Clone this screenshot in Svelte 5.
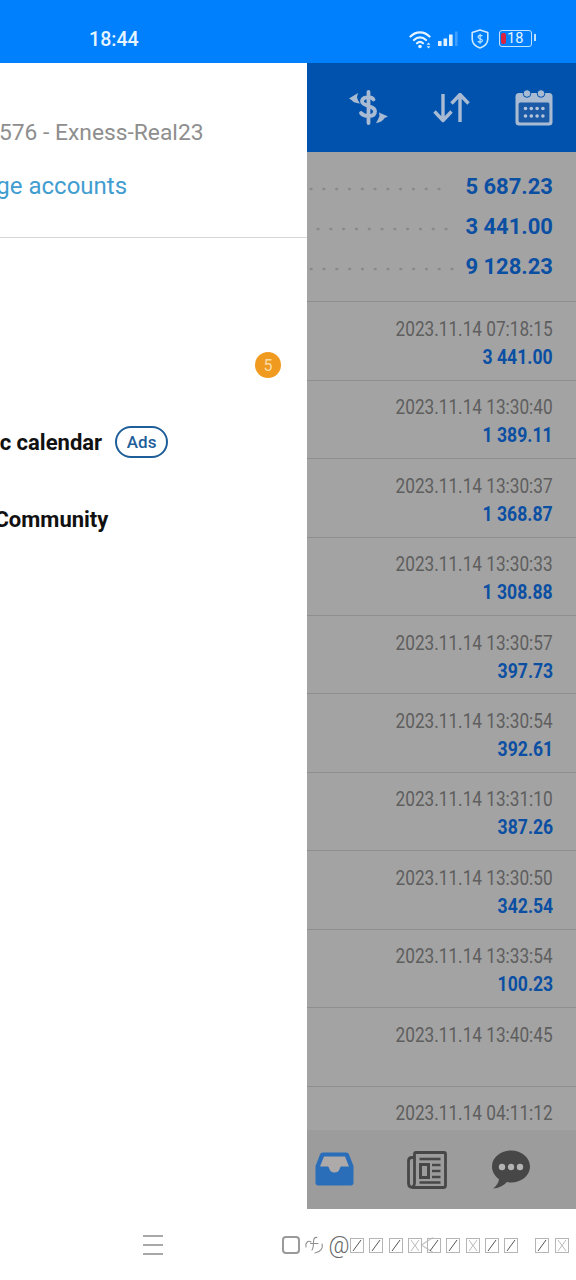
<script>
  const totals = [
    { value: '5 687.23', shift: 'a' },
    { value: '3 441.00', shift: 'b' },
    { value: '9 128.23', shift: 'c' }
  ];
  const rows = [
    ['2023.11.14 07:18:15', '3 441.00'],
    ['2023.11.14 13:30:40', '1 389.11'],
    ['2023.11.14 13:30:37', '1 368.87'],
    ['2023.11.14 13:30:33', '1 308.88'],
    ['2023.11.14 13:30:57', '397.73'],
    ['2023.11.14 13:30:54', '392.61'],
    ['2023.11.14 13:31:10', '387.26'],
    ['2023.11.14 13:30:50', '342.54'],
    ['2023.11.14 13:33:54', '100.23'],
    ['2023.11.14 13:40:45', ''],
    ['2023.11.14 04:11:12', '']
  ];
  const tofuA = ['s', 's', 's', 'x', 's', 's', 'x', 's', 's'];
  const tofuB = ['s', 'x'];
  const dots = [0, 1, 2, 3];
</script>

{#snippet tofu(kind)}
  <svg class="tofu" viewBox="0 0 14 15" width="14" height="15" aria-hidden="true">
    <rect x="0.5" y="0.5" width="13" height="14" fill="none" stroke="#b5b5b5" />
    <path d="M3 13L11 2" stroke={kind === 's' ? '#555' : '#bbb'} stroke-width="1" />
    {#if kind === 'x'}<path d="M3 2L11 13" stroke="#bbb" stroke-width="1" />{/if}
  </svg>
{/snippet}

<div class="page">
  <header class="status">
    <span class="time">18:44</span>
    <div class="status-icons">
      <svg class="wifi" viewBox="0 0 24 20" width="24" height="20" aria-hidden="true">
        <path d="M1.5 7.5C7 2 15 2 20.5 7.5M5 11C8.5 7.6 13.5 7.6 17 11M8 14.2C9.8 12.6 12.2 12.6 14 14.2" fill="none" stroke="#e4f3ff" stroke-width="2.2" stroke-linecap="round" />
        <circle cx="11" cy="17.5" r="1.8" fill="#e4f3ff" />
        <path d="M19.5 13.5l2 2.2h-4zM19.5 19.5l2-2.2h-4z" fill="#cfe8ff" />
      </svg>
      <svg class="signal" viewBox="0 0 20 16" width="20" height="16" aria-hidden="true">
        <rect x="0" y="10" width="3.6" height="5" fill="#dff1ff" />
        <rect x="5.5" y="7.5" width="3.6" height="7.5" fill="#dff1ff" />
        <rect x="11" y="3.5" width="3.6" height="11.5" fill="#dff1ff" />
        <rect x="17" y="0.5" width="2.6" height="14.5" fill="#3f9eff" />
      </svg>
      <svg class="shield" viewBox="0 0 18 20" width="18" height="20" aria-hidden="true">
        <path d="M9 1L16.8 3.6V10C16.8 14.4 13.4 17.4 9 19C4.6 17.4 1.2 14.4 1.2 10V3.6Z" fill="none" stroke="#cfeaff" stroke-width="1.6" stroke-linejoin="round" />
        <path d="M11.4 7.2C10.6 6 7 6 7 8C7 10.2 11.4 9.4 11.4 11.6C11.4 13.6 7.6 13.4 6.8 12.2M9.1 4.8V14.8" fill="none" stroke="#bfe6ff" stroke-width="1.2" />
      </svg>
      <div class="battery">
        <span class="level"></span>
        <span class="pct">18</span>
      </div>
    </div>
  </header>

  <div class="body">
    <aside class="drawer">
      <div class="drawer-inner">
        <div class="account">
          <p class="acct">576 - Exness-Real23</p>
          <p class="manage">Manage accounts</p>
        </div>
        <ul class="items">
          <li></li>
          <li><span class="badge">5</span></li>
          <li><span class="label">Economic calendar</span><span class="ads">Ads</span></li>
          <li><span class="label">Traders Community</span></li>
        </ul>
      </div>
    </aside>

    <main class="main">
      <div class="toolbar">
        <svg class="tool money" viewBox="0 0 40 36" width="40" height="36" aria-hidden="true">
          <path d="M25.5 9.5C23.5 6.5 14 6 14 11.5C14 16.5 27 15 27 21.5C27 27.5 16 27 13 23M20.5 2V33" fill="none" stroke="#a9bbd3" stroke-width="3.8" stroke-linecap="round" />
          <path d="M1 8.5L10 3L9 7C9.5 9.5 10.5 11.5 12 13.5C7 13 4.5 11.5 3.5 10Z" fill="#a9bbd3" />
          <path d="M40 26.5L31 22.5L31.5 26C30.5 28.5 29.5 30.5 28 33C33 32.5 35.5 30 36.5 28Z" fill="#a9bbd3" />
        </svg>
        <svg class="tool arrows" viewBox="0 0 38 30" width="38" height="30" aria-hidden="true">
          <path d="M10 1V27M1.5 18.5L10 27.5L18.5 18.5M27 29V2M18.5 10.5L27 1.5L35.5 10.5" fill="none" stroke="#a9bbd3" stroke-width="3.4" stroke-linejoin="round" />
        </svg>
        <svg class="tool cal" viewBox="0 0 38 37" width="38" height="37" aria-hidden="true">
          <rect x="0.5" y="4" width="37" height="32.5" rx="3.5" fill="#a9bbd3" />
          <rect x="3.6" y="13.5" width="30.8" height="20" rx="1.5" fill="#1b5aa6" />
          <circle cx="12" cy="4.5" r="3.8" fill="#a9bbd3" stroke="#0052ad" stroke-width="1" />
          <circle cx="26" cy="4.5" r="3.8" fill="#a9bbd3" stroke="#0052ad" stroke-width="1" />
          {#each dots as d}
            <circle cx={10.5 + d * 5.8} cy="19.5" r="1.8" fill="#b6c6da" />
            <circle cx={10.5 + d * 5.8} cy="27" r="1.8" fill="#b6c6da" />
          {/each}
        </svg>
      </div>

      <section class="summary">
        {#each totals as t}
          <div class="total">
            <span class="leader {t.shift}"></span>
            <span class="total-value">{t.value}</span>
          </div>
        {/each}
      </section>

      <div class="list">
        {#each rows as r}
          <div class="row">
            <span class="date">{r[0]}</span>
            {#if r[1]}<span class="amount">{r[1]}</span>{/if}
          </div>
        {/each}
      </div>

      <nav class="tabs">
        <svg class="tab-inbox" viewBox="0 0 39 34" width="39" height="34" aria-hidden="true">
          <path d="M8 0.5H31C32.5 0.5 33.5 1.4 34 2.6L38.5 14V31C38.5 32.6 37.4 33.5 36 33.5H3C1.6 33.5 0.5 32.6 0.5 31V14L5 2.6C5.5 1.4 6.5 0.5 8 0.5Z" fill="#2a6db9" />
          <path d="M9 4.5H30L34 14.5H26.5C25.5 14.5 25.5 15 25 16C24 19 22.5 20.5 19.5 20.5C16.5 20.5 15 19 14 16C13.5 15 13.5 14.5 12.5 14.5H5Z" fill="#aeaaaa" />
        </svg>
        <svg class="tab-news" viewBox="0 0 40 38" width="40" height="38" aria-hidden="true">
          <path d="M7.5 6.5H5C2.8 6.5 1.5 8 1.5 10V32C1.5 35 3.5 36.5 6 36.5H36.5C38 36.5 38.5 35.8 38.5 34.5V3C38.5 2 38 1.5 37 1.5H9C8 1.5 7.5 2 7.5 3V32C7.5 34.5 6 36.5 4 36" fill="none" stroke="#474747" stroke-width="2.8" />
          <path d="M12.5 8H33.5" stroke="#474747" stroke-width="2.6" />
          <rect x="13.5" y="13.5" width="8" height="13" fill="none" stroke="#474747" stroke-width="3" />
          <path d="M25 14H33.5M25 20H33.5M25 26H33.5M12.5 31.5H33.5" stroke="#474747" stroke-width="2.4" />
        </svg>
        <svg class="tab-chat" viewBox="0 0 38 39" width="38" height="39" aria-hidden="true">
          <path d="M19 0.5C29.5 0.5 38 7.5 38 16.5C38 25.5 29.5 32.5 19 32.5C17.5 32.5 16 32.4 14.8 32.1C12 35.5 6.5 38.5 1 38.5C4.5 36 6.5 33 7 29.3C3 26.3 0 21.8 0 16.5C0 7.5 8.5 0.5 19 0.5Z" fill="#474747" />
          <circle cx="10" cy="17" r="3.2" fill="#b3b3b3" />
          <circle cx="19" cy="17" r="3.2" fill="#b3b3b3" />
          <circle cx="28" cy="17" r="3.2" fill="#b3b3b3" />
        </svg>
      </nav>
    </main>
  </div>

  <footer class="navbar">
    <div class="burger"><span></span><span></span><span></span></div>
    <span class="square"></span>
    <svg class="back" viewBox="0 0 14 18" width="14" height="18" aria-hidden="true">
      <path d="M13 1.5L1.5 9L13 16.5" fill="none" stroke="#c8c8c8" stroke-width="1.4" />
    </svg>
    <div class="watermark">
      <svg class="logo" viewBox="0 0 20 22" width="20" height="22" aria-hidden="true">
        <path d="M2 13C1 9 4 6 7 8M13 3.5C10.5 3 9.5 5 9.5 8C9.5 11 9.5 14 8 16M6.5 9.5H14M18 10C19.5 14 16.5 18 11 19" fill="none" stroke="#8f8f8f" stroke-width="1.1" stroke-linecap="round" />
      </svg>
      <span class="at">@</span>
      <div class="tofus first">
        {#each tofuA as k}{@render tofu(k)}{/each}
      </div>
      <div class="tofus second">
        {#each tofuB as k}{@render tofu(k)}{/each}
      </div>
    </div>
  </footer>
</div>

<style>
  :global(body) {
    margin: 0;
    background: #fff;
  }
  p, ul {
    margin: 0;
    padding: 0;
  }
  .page {
    width: 576px;
    height: 1280px;
    display: flex;
    flex-direction: column;
    overflow: hidden;
    font-family: Roboto, "Liberation Sans", sans-serif;
  }
  .status {
    height: 63px;
    flex: none;
    background: #0180fe;
    display: flex;
    align-items: center;
    padding: 14px 44px 0 89px;
    box-sizing: border-box;
    justify-content: space-between;
    color: #e6f4ff;
  }
  .time {
    font-size: 19.6px;
    font-weight: 500;
    margin-top: 1px;
  }
  .status-icons {
    display: flex;
    align-items: center;
  }
  .signal {
    margin-left: 5px;
  }
  .shield {
    margin-left: 13px;
  }
  .battery {
    margin-left: 10px;
    width: 33px;
    height: 17px;
    box-sizing: border-box;
    border: 1.5px solid #bfe3ff;
    border-radius: 3px;
    display: flex;
    align-items: center;
    position: relative;
    padding-left: 1px;
    gap: 1px;
  }
  .battery::after {
    content: "";
    position: absolute;
    right: -4.5px;
    top: 3px;
    width: 2px;
    height: 7px;
    background: #bfe3ff;
  }
  .level {
    width: 5px;
    height: 11px;
    background: #d8243f;
    border-radius: 2px;
  }
  .pct {
    font-size: 14.5px;
    color: #e6f4ff;
  }
  .body {
    flex: none;
    height: 1146px;
    display: flex;
  }
  .drawer {
    width: 307px;
    flex: none;
    background: #fff;
    overflow: hidden;
  }
  .drawer-inner {
    margin-left: -100px;
    width: 407px;
  }
  .account {
    height: 174.5px;
    box-sizing: border-box;
    padding: 56px 0 0 99px;
    border-bottom: 1px solid #d6d6d6;
  }
  .acct {
    font-size: 22.8px;
    line-height: 28px;
    color: #8e8e8e;
  }
  .manage {
    font-size: 24px;
    line-height: 28px;
    margin-top: 25px;
    margin-left: -63px;
    color: #3f9dd0;
  }
  .items {
    list-style: none;
  }
  .items li {
    height: 77.2px;
    display: flex;
    align-items: center;
    padding-left: 14px;
    padding-right: 26px;
    box-sizing: border-box;
    font-size: 22px;
    font-weight: 700;
    color: #111;
  }
  .items li:first-child {
    margin-top: 12px;
  }
  .items li:last-child {
    padding-left: 13px;
  }
  .badge {
    margin-left: auto;
    width: 26px;
    height: 26px;
    border-radius: 50%;
    background: #f09a1f;
    color: #f8dca8;
    font-size: 16px;
    font-weight: 400;
    display: flex;
    align-items: center;
    justify-content: center;
  }
  .ads {
    margin-left: 13px;
    border: 2px solid #1f5f99;
    border-radius: 16px;
    height: 32px;
    width: 53px;
    box-sizing: border-box;
    display: flex;
    align-items: center;
    justify-content: center;
    font-size: 17px;
    font-weight: 500;
    color: #1f5f99;
  }
  .main {
    flex: 1;
    min-width: 0;
    display: flex;
    flex-direction: column;
    background: #a3a3a3;
  }
  .toolbar {
    height: 89px;
    flex: none;
    background: #0052ad;
    display: flex;
    align-items: center;
  }
  .money {
    margin-left: 41px;
  }
  .arrows {
    margin-left: 45px;
  }
  .cal {
    margin-left: 44px;
  }
  .summary {
    height: 149.2px;
    flex: none;
    box-sizing: border-box;
    padding-top: 14px;
    padding-right: 23px;
  }
  .total {
    height: 40px;
    display: flex;
    align-items: center;
  }
  .leader {
    flex: 1;
    height: 4px;
    margin-top: 5px;
    background: radial-gradient(circle, #8a8a8a 1.2px, transparent 1.7px) right / 12.8px 4px repeat-x;
  }
  .leader.a {
    margin-right: 20px;
  }
  .leader.b {
    margin-right: 13px;
  }
  .leader.c {
    margin-right: 7px;
  }
  .total-value {
    font-size: 22px;
    font-weight: 700;
    color: #0b4fa3;
  }
  .list {
    flex: 1;
    min-height: 0;
    overflow: hidden;
  }
  .row {
    height: 78.45px;
    box-sizing: border-box;
    border-top: 1.5px solid #8e8e8e;
    padding: 12.6px 23px 0 0;
    display: flex;
    flex-direction: column;
    align-items: flex-end;
  }
  .date {
    font-size: 20px;
    line-height: 28px;
    color: #5e5e5e;
    transform: scaleX(0.86);
    transform-origin: right center;
    white-space: nowrap;
  }
  .amount {
    font-size: 20px;
    line-height: 28px;
    font-weight: 700;
    color: #0b4fa3;
    transform: scaleX(0.88);
    transform-origin: right center;
    white-space: nowrap;
  }
  .tabs {
    height: 79px;
    flex: none;
    background: #9c9c9c;
    display: flex;
    align-items: center;
    padding-left: 8px;
  }
  .tab-inbox {
    margin-top: -1px;
  }
  .tab-news {
    margin-left: 53px;
  }
  .tab-chat {
    margin-left: 45px;
  }
  .navbar {
    flex: none;
    height: 71px;
    position: relative;
    display: flex;
    align-items: center;
    padding: 0 0 0 143px;
    background: #fff;
  }
  .burger {
    width: 20px;
    height: 20px;
    display: flex;
    flex-direction: column;
    justify-content: space-between;
    margin-top: 1px;
  }
  .burger span {
    height: 2px;
    background: #a8a8a8;
  }
  .square {
    width: 18px;
    height: 18px;
    box-sizing: border-box;
    border: 2px solid #9a9a9a;
    border-radius: 4px;
    margin-left: 119px;
    margin-top: 1px;
  }
  .back {
    margin-left: 120px;
  }
  .watermark {
    position: absolute;
    left: 304px;
    top: 24px;
    display: flex;
    align-items: center;
    height: 24px;
  }
  .at {
    font-size: 23px;
    font-weight: 300;
    color: #666;
    margin-left: 4px;
    width: 22px;
    text-align: center;
  }
  .tofus {
    display: flex;
    gap: 5.3px;
  }
  .first {
    margin-left: 0;
  }
  .second {
    margin-left: 17px;
  }
</style>
